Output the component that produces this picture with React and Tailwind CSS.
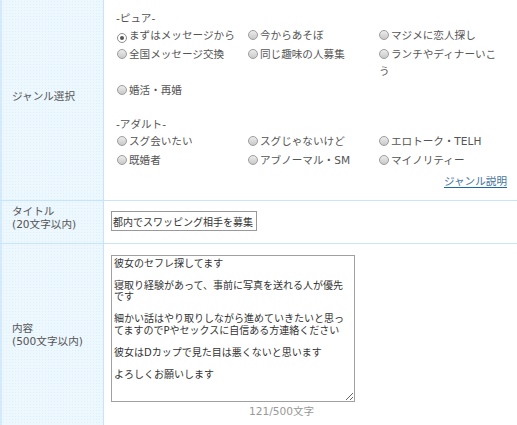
const pure = [
  ['まずはメッセージから', true],
  ['今からあそぼ'],
  ['マジメに恋人探し'],
  ['全国メッセージ交換'],
  ['同じ趣味の人募集'],
  ['ランチやディナーいこう'],
  ['婚活・再婚'],
];

const adult = [
  ['スグ会いたい'],
  ['スグじゃないけど'],
  ['エロトーク・TELH'],
  ['既婚者'],
  ['アブノーマル・SM'],
  ['マイノリティー'],
];

const body = `彼女のセフレ探してます

寝取り経験があって、事前に写真を送れる人が優先です

細かい話はやり取りしながら進めていきたいと思ってますのでPやセックスに自信ある方連絡ください

彼女はDカップで見た目は悪くないと思います

よろしくお願いします`;

function Radio({ checked }) {
  if (checked) {
    return (
      <span className="inline-flex items-center justify-center w-[10px] h-[10px] mr-[2px] align-[-1px] rounded-full border border-[#8d8d8d] bg-white">
        <span className="w-[4px] h-[4px] rounded-full bg-[#555]" />
      </span>
    );
  }
  return (
    <span className="inline-block w-[10px] h-[10px] mr-[2px] align-[-1px] rounded-full border border-[#9c9c9c] bg-linear-to-b from-[#ececec] to-[#c9c9c9]" />
  );
}

function Group({ title, items, className }) {
  return (
    <div className={className}>
      <div className="leading-[17px]">{title}</div>
      <div className="flex flex-wrap">
        {items.map(([label, checked]) => (
          <div key={label} className="w-[131px] pl-[1px] pr-[6px] mb-[2px] leading-[17px]">
            <Radio checked={checked} />
            {label}
          </div>
        ))}
      </div>
    </div>
  );
}

function Label({ children }) {
  return (
    <div className="w-[104px] shrink-0 flex items-center pl-[10px] pb-2 border-l-2 border-r border-l-[#d3eafa] border-r-[#c6e4fa] bg-[#edf7fe] bg-[radial-gradient(circle,#deeefa_0.6px,transparent_0.8px)] bg-size-[3px_3px] leading-[13px]">
      <div>{children}</div>
    </div>
  );
}

export default function App() {
  return (
    <div className="w-[517px] h-[425px] overflow-hidden bg-white text-[10.6px] text-[#555] font-['DejaVu_Sans','Noto_Sans_CJK_JP',sans-serif]">
      <div className="flex h-[201px] border-b border-[#c6e4fa]">
        <Label>ジャンル選択</Label>
        <div className="flex-1 pl-[12px] pr-[4px] pt-[10px]">
          <Group title="-ピュア-" items={pure} />
          <Group title="-アダルト-" items={adult} className="mt-[15px]" />
          <div className="mt-[2px] mr-[6px] text-right leading-[17px]">
            <a href="#" className="text-[#44749c] underline decoration-[#1c6aa3] underline-offset-2">ジャンル説明</a>
          </div>
        </div>
      </div>

      <div className="flex h-[43px] border-b border-[#c6e4fa]">
        <Label>
          タイトル
          <br />
          (20文字以内)
        </Label>
        <div className="flex-1 pl-[7px] pt-[10px]">
          <input
            readOnly
            value="都内でスワッピング相手を募集します"
            className="block w-[146px] h-[20px] px-[1px] border border-[#999] text-[10px] text-[#333] outline-none"
          />
        </div>
      </div>

      <div className="flex h-[190px]">
        <Label>
          内容
          <br />
          (500文字以内)
        </Label>
        <div className="flex-1 pl-[7px] pt-[11px]">
          <textarea
            readOnly
            value={body}
            className="block w-[244px] h-[147px] px-[2px] py-[2px] border border-[#a0a0a0] text-[10px] leading-[11.1px] text-[#333] outline-none"
          />
          <div className="ml-[138px] mt-[1px] leading-[17px] text-[#999]">121/500文字</div>
        </div>
      </div>
    </div>
  );
}
